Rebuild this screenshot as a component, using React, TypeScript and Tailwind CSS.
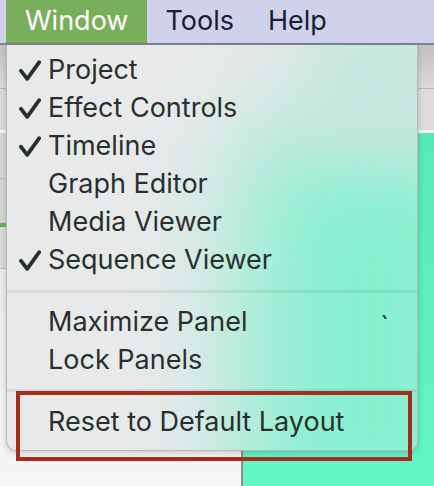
import React from 'react';

const Check: React.FC = () => (
  <svg width="22" height="21" viewBox="0 0 22 21" fill="none" className="text-[#2a2f2e]">
    <path d="M2 10.8 L8.2 18.8 L20.2 2.2" stroke="currentColor" strokeWidth="3.8" strokeLinecap="round" strokeLinejoin="round" />
  </svg>
);

type Item = { label: string; checked?: boolean; shortcut?: string };

const groups: Item[][] = [
  [
    { label: 'Project', checked: true },
    { label: 'Effect Controls', checked: true },
    { label: 'Timeline', checked: true },
    { label: 'Graph Editor' },
    { label: 'Media Viewer' },
    { label: 'Sequence Viewer', checked: true },
  ],
  [{ label: 'Maximize Panel', shortcut: '`' }, { label: 'Lock Panels' }],
  [{ label: 'Reset to Default Layout' }],
];

const MenuRow: React.FC<{ item: Item }> = ({ item }) => (
  <div className="flex h-[38px] items-center pl-[12px] pr-[28px]">
    <div className="flex w-[29px] items-center">{item.checked && <Check />}</div>
    <span className="flex-1">{item.label}</span>
    {item.shortcut && <span className="self-start pt-[4px]">{item.shortcut}</span>}
  </div>
);

const App: React.FC = () => {
  return (
    <div
      className="relative flex h-[486px] w-[434px] flex-col overflow-hidden bg-[#f1f1f1]"
      style={{ fontFamily: 'Inter, "Noto Sans", sans-serif' }}
    >
      {/* menu bar */}
      <div className="flex h-[45px] shrink-0 items-stretch border-b-2 border-[#80838f] bg-[#cfd2ea] pl-[6px] text-[27px] text-[#1b1e33]">
        <div className="flex items-center bg-[#79ae5b] px-[19px] text-white">Window</div>
        <div className="flex items-center px-[18px]">Tools</div>
        <div className="flex items-center px-[16px]">Help</div>
      </div>

      {/* app window behind the menu */}
      <div className="h-[44px] shrink-0 border-b border-[#b4b4b4] bg-gradient-to-b from-[#c2c2c2] to-[#dadada]" />
      <div className="h-[44px] shrink-0 border-b-[3px] border-[#f3f3f3] bg-[#dcdcdc]" />
      <div className="flex flex-1">
        <div className="flex w-[241px] flex-col">
          <div className="h-[46px] border-b border-[#b9b9b9] bg-[#d6d6d6]" />
          <div className="relative h-[45px] border-b border-[#b9b9b9] bg-[#d6d6d6]">
            <div className="absolute left-0 top-[44px] h-[4px] w-[6px] bg-[#6ab04c]" />
          </div>
          <div className="h-[45px] border-b border-[#b9b9b9] bg-[#d9d9d9]" />
          <div className="flex-1 bg-gradient-to-b from-[#ececec] to-[#f6f6f6]" />
        </div>
        <div className="flex-1 border-l-2 border-[#8c8c8c] bg-gradient-to-b from-[#58e8b6] to-[#62f7c7]" />
      </div>

      {/* dropdown */}
      <div className="absolute left-[6px] top-[45px] w-[412px] overflow-hidden rounded-b-[10px] border border-t-0 border-[#b6b9b9] bg-[#e8e9eb] text-[27px] text-[#2a2f2e] shadow-[0_2px_6px_rgba(0,0,0,0.18)]">
        <div className="pointer-events-none absolute left-[235px] top-[90px] h-[420px] w-[260px] bg-[#86f0cf] blur-[55px]" />
        <div className="pointer-events-none absolute left-[300px] top-[-40px] h-[140px] w-[160px] bg-[#c4e6dd] blur-[40px]" />
        <div className="relative pb-[9px] pt-[6px]">
          {groups.map((g, gi) => (
            <div key={gi}>
              {gi > 0 && <div className={`h-[3px] bg-black/[0.07] ${gi === 1 ? 'mb-[10px] mt-[11px]' : 'mb-[11px] mt-[10px]'}`} />}
              {g.map((item) => (
                <MenuRow key={item.label} item={item} />
              ))}
            </div>
          ))}
        </div>
      </div>

      {/* annotation */}
      <div className="absolute left-[16px] top-[391px] h-[70px] w-[396px] border-4 border-[#a82c1d]" />
    </div>
  );
};

export default App;
